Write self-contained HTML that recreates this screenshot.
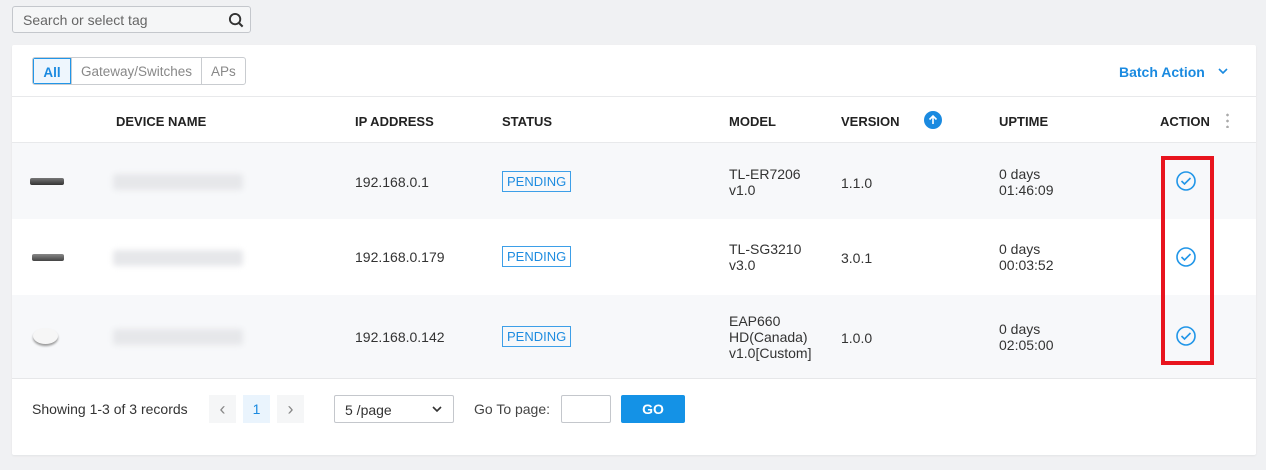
<!DOCTYPE html>
<html><head><style>
*{margin:0;padding:0;box-sizing:border-box}
body{width:1266px;height:470px;background:#f0f1f3;font-family:"Liberation Sans",sans-serif;font-size:14px;color:#333;position:relative;overflow:hidden}
.a{position:absolute}
.search{left:12px;top:6px;width:239px;height:27px;border:1px solid #c4c7cc;border-radius:3px;background:#f5f6f7;color:#666;padding:5px 10px;font-size:14px}
.card{left:12px;top:45px;width:1244px;height:410px;background:#fff;border-radius:2px;box-shadow:0 1px 2px rgba(0,0,0,.06)}
.tabs{left:20px;top:12px;height:28px;display:flex;border:1px solid #c9ccd0;border-radius:3px;overflow:hidden}
.tabs div{padding:6px 9px 0;color:#888;font-size:13.5px;border-left:1px solid #c9ccd0;height:26px}
.tabs .on{border:1px solid #2196e8;color:#1a8ae0;font-weight:bold;background:#eef6fd;width:38px;text-align:center;padding:6px 0 0}
.hdr{font-weight:bold;font-size:13px;color:#222;top:69px}
.row{left:0;width:1244px}
.pend{border:1px solid #3d9fe8;color:#1e8ce0;font-size:13px;padding:2px 4px;}
.blur{width:130px;height:16px;background:#e6e7ea;filter:blur(3px);border-radius:3px}
.chk{width:22px;height:22px}
</style></head><body>
<div class="a search">Search or select tag
<svg class="a" style="right:5px;top:5px" width="17" height="17" viewBox="0 0 18 18"><circle cx="7.5" cy="7.5" r="5.5" fill="none" stroke="#333" stroke-width="2"/><path d="M11.5 11.5L15.5 15.5" stroke="#333" stroke-width="2.2"/></svg></div>
<div class="a card">
 <div class="a tabs"><div class="on">All</div><div>Gateway/Switches</div><div>APs</div></div>
 <div class="a" style="left:1107px;top:19px;color:#1a8ae0;font-weight:bold;font-size:14px">Batch Action</div>
 <svg class="a" style="left:1205px;top:21px" width="12" height="10"><path d="M2 3l4 4 4-4" fill="none" stroke="#1a8ae0" stroke-width="1.6"/></svg>
 <div class="a" style="left:0;top:51px;width:1244px;height:1px;background:#e8e9eb"></div>
 <div class="a hdr" style="left:104px">DEVICE NAME</div>
 <div class="a hdr" style="left:343px">IP ADDRESS</div>
 <div class="a hdr" style="left:490px">STATUS</div>
 <div class="a hdr" style="left:717px">MODEL</div>
 <div class="a hdr" style="left:829px">VERSION</div>
 <div class="a" style="left:912px;top:66px;width:18px;height:18px;border-radius:50%;background:#1a8ae0"><svg width="18" height="18"><path d="M9 13V5M5.5 8.5L9 5l3.5 3.5" fill="none" stroke="#fff" stroke-width="1.6"/></svg></div>
 <div class="a hdr" style="left:987px">UPTIME</div>
 <div class="a hdr" style="left:1148px">ACTION</div>
 <div class="a" style="left:1214px;top:67px;width:3px;height:16px;background:radial-gradient(circle,#aaa 1.2px,transparent 1.5px) 0 0/3px 6px"></div>
 <div class="a" style="left:0;top:97px;width:1244px;height:1px;background:#e8e9eb"></div>

 <div class="a row" style="top:98px;height:76px;background:#f7f8fa"></div>
 <div class="a row" style="top:250px;height:83px;background:#f7f8fa"></div>
 <div class="a row" style="top:333px;height:1px;background:#e6e7e9"></div>

 <div class="a" style="left:18px;top:133px;width:34px;height:7px;background:linear-gradient(#777,#333);border-radius:2px"></div>
 <div class="a" style="left:20px;top:209px;width:32px;height:7px;background:linear-gradient(#888,#444);border-radius:2px"></div>
 <div class="a" style="left:21px;top:283px;width:25px;height:16px;border-radius:50%;background:#f6f6f6;box-shadow:0 2px 2px #999"></div>

 <div class="a blur" style="left:101px;top:129px"></div>
 <div class="a blur" style="left:101px;top:205px"></div>
 <div class="a blur" style="left:101px;top:284px"></div>

 <div class="a" style="left:343px;top:129px">192.168.0.1</div>
 <div class="a" style="left:343px;top:204px">192.168.0.179</div>
 <div class="a" style="left:343px;top:284px">192.168.0.142</div>

 <div class="a pend" style="left:490px;top:126px">PENDING</div>
 <div class="a pend" style="left:490px;top:201px">PENDING</div>
 <div class="a pend" style="left:490px;top:281px">PENDING</div>

 <div class="a" style="left:717px;top:121px;line-height:16px">TL-ER7206<br>v1.0</div>
 <div class="a" style="left:717px;top:196px;line-height:16px">TL-SG3210<br>v3.0</div>
 <div class="a" style="left:717px;top:268px;line-height:16px">EAP660<br>HD(Canada)<br>v1.0[Custom]</div>

 <div class="a" style="left:829px;top:130px">1.1.0</div>
 <div class="a" style="left:829px;top:205px">3.0.1</div>
 <div class="a" style="left:829px;top:285px">1.0.0</div>

 <div class="a" style="left:987px;top:121px;line-height:16px">0 days<br>01:46:09</div>
 <div class="a" style="left:987px;top:196px;line-height:16px">0 days<br>00:03:52</div>
 <div class="a" style="left:987px;top:276px;line-height:16px">0 days<br>02:05:00</div>

 <svg class="a chk" style="left:1163px;top:125px" viewBox="0 0 22 22"><circle cx="11" cy="11" r="9" fill="none" stroke="#2196e8" stroke-width="1.6"/><path d="M6.5 11l3 3 6-6" fill="none" stroke="#2196e8" stroke-width="1.6"/></svg>
 <svg class="a chk" style="left:1163px;top:201px" viewBox="0 0 22 22"><circle cx="11" cy="11" r="9" fill="none" stroke="#2196e8" stroke-width="1.6"/><path d="M6.5 11l3 3 6-6" fill="none" stroke="#2196e8" stroke-width="1.6"/></svg>
 <svg class="a chk" style="left:1163px;top:280px" viewBox="0 0 22 22"><circle cx="11" cy="11" r="9" fill="none" stroke="#2196e8" stroke-width="1.6"/><path d="M6.5 11l3 3 6-6" fill="none" stroke="#2196e8" stroke-width="1.6"/></svg>
 <div class="a" style="left:1149px;top:111px;width:53px;height:209px;border:4px solid #e8141e"></div>

 <div class="a" style="left:20px;top:356px;font-size:14px">Showing 1-3 of 3 records</div>
 <div class="a" style="left:197px;top:350px;width:27px;height:28px;background:#f5f6f7;color:#888;text-align:center;line-height:28px;font-size:18px">‹</div>
 <div class="a" style="left:231px;top:350px;width:27px;height:28px;background:#eaf4fd;color:#1a8ae0;text-align:center;line-height:28px;font-size:14px">1</div>
 <div class="a" style="left:265px;top:350px;width:27px;height:28px;background:#f5f6f7;color:#888;text-align:center;line-height:28px;font-size:18px">›</div>
 <div class="a" style="left:322px;top:350px;width:120px;height:28px;border:1px solid #c4c7cc;border-radius:2px;padding:6px 10px;font-size:14px">5 /page</div>
 <svg class="a" style="left:420px;top:360px" width="10" height="8"><path d="M1 2l4 4 4-4" fill="none" stroke="#333" stroke-width="1.6"/></svg>
 <div class="a" style="left:462px;top:356px;font-size:14px;color:#444">Go To page:</div>
 <div class="a" style="left:549px;top:350px;width:50px;height:28px;border:1px solid #c4c7cc;border-radius:2px"></div>
 <div class="a" style="left:609px;top:350px;width:64px;height:28px;background:#1492e6;border-radius:2px;color:#fff;font-weight:bold;text-align:center;line-height:28px">GO</div>
</div>
</body></html>
